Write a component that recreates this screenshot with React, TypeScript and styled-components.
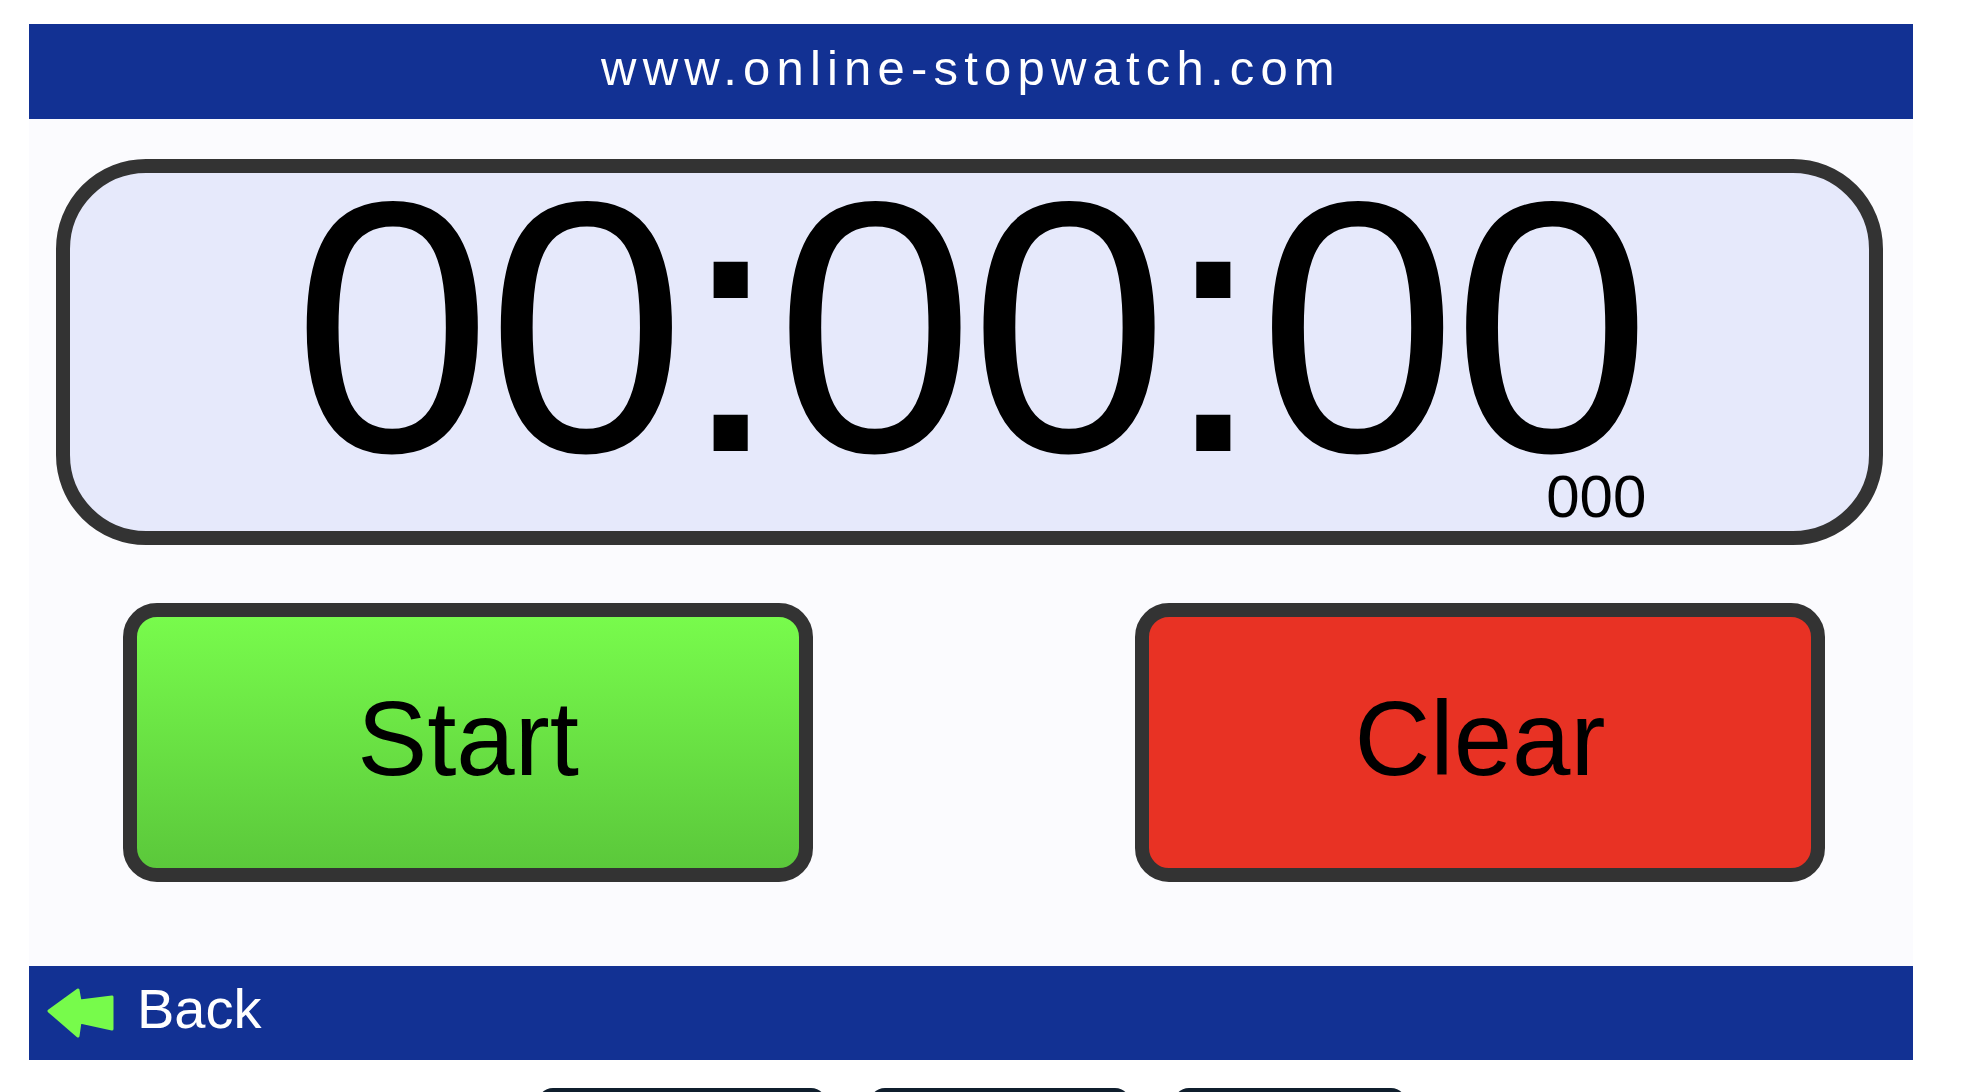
import React from "react";
import styled, { createGlobalStyle } from "styled-components";

const GlobalStyle = createGlobalStyle`
  html, body {
    margin: 0;
    padding: 0;
    background: #ffffff;
    font-family: "Liberation Sans", Arial, sans-serif;
  }
`;

const Page = styled.div`
  width: 1884px;
  margin: 24px 0 0 29px;
  display: flex;
  flex-direction: column;
`;

const Header = styled.header`
  height: 95px;
  background-color: #123193;
  display: flex;
  align-items: center;
  justify-content: center;
`;

const SiteName = styled.div`
  color: #ffffff;
  font-size: 49px;
  line-height: 49px;
  letter-spacing: 6.2px;
  padding: 0 0 6px 0;
`;

const Content = styled.main`
  height: 847px;
  background-color: #fbfbfe;
  display: flex;
  flex-direction: column;
  padding: 40px 30px 0 27px;
  box-sizing: border-box;
`;

const TimerBox = styled.div`
  height: 386px;
  box-sizing: border-box;
  border: 14px solid #333333;
  border-radius: 90px;
  background-color: #e6e9fb;
  display: flex;
  justify-content: center;
`;

const Readout = styled.div`
  display: flex;
  flex-direction: column;
  align-items: flex-end;
  margin-top: 17px;
`;

const Digits = styled.div`
  font-size: 358px;
  line-height: 274px;
  letter-spacing: -5px;
  color: #000000;
`;

const Millis = styled.div`
  font-size: 60px;
  line-height: 60px;
  color: #000000;
  margin: 3px 0 0 0;
`;

const ButtonRow = styled.div`
  display: flex;
  justify-content: space-between;
  margin: 58px 58px 0 67px;
`;

const BigButton = styled.button<{ $bg: string }>`
  width: 690px;
  height: 279px;
  box-sizing: border-box;
  border: 14px solid #333333;
  border-radius: 34px;
  background: ${({ $bg }) => $bg};
  font-family: "Liberation Sans", Arial, sans-serif;
  font-size: 105px;
  line-height: 105px;
  color: #000000;
  padding: 0 0 8px;
  cursor: pointer;
`;

const Footer = styled.footer`
  height: 94px;
  background-color: #123193;
  display: flex;
  align-items: center;
  gap: 22px;
  padding-left: 18px;
`;

const BackLabel = styled.span`
  color: #ffffff;
  font-size: 56px;
  line-height: 56px;
  margin-bottom: 8px;
`;

const TabRow = styled.div`
  display: flex;
  gap: 42px;
  margin: 28px 0 0 508px;
`;

const Tab = styled.div<{ $w: number }>`
  width: ${({ $w }) => $w}px;
  height: 20px;
  background-color: #0f1e2d;
  border-radius: 16px 16px 0 0;
`;

const BackArrow = () => (
  <svg width="68" height="52" viewBox="0 0 68 52">
    <polygon
      points="2,24 31,3 33,14 65,10 65,42 33,35 31,49"
      fill="#77fb4b"
      stroke="#77fb4b"
      strokeWidth="3"
      strokeLinejoin="round"
    />
  </svg>
);

const App: React.FC = () => {
  return (
    <>
      <GlobalStyle />
      <Page>
        <Header>
          <SiteName>www.online-stopwatch.com</SiteName>
        </Header>
        <Content>
          <TimerBox>
            <Readout>
              <Digits>00:00:00</Digits>
              <Millis>000</Millis>
            </Readout>
          </TimerBox>
          <ButtonRow>
            <BigButton $bg="linear-gradient(#78fb4c, #5bc83b)">Start</BigButton>
            <BigButton $bg="#e83224">Clear</BigButton>
          </ButtonRow>
        </Content>
        <Footer>
          <BackArrow />
          <BackLabel>Back</BackLabel>
        </Footer>
        <TabRow>
          <Tab $w={290} />
          <Tab $w={262} />
          <Tab $w={234} />
        </TabRow>
      </Page>
    </>
  );
};

export default App;
